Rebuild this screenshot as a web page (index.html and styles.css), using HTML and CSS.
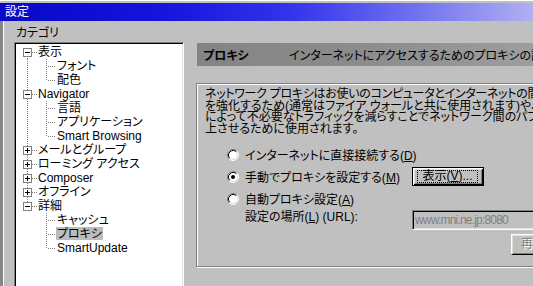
FILE: index.html
```html
<!DOCTYPE html>
<html lang="ja">
<head>
<meta charset="utf-8">
<title>設定</title>
<link rel="stylesheet" href="styles.css">
</head>
<body>
<div class="window">
  <div class="titlebar">設定</div>
  <div class="client">
    <div class="left">
      <div class="caption">カテゴリ</div>
      <div class="tree">
        <div class="row">
          <span class="g0 first"><svg class="box" width="9" height="9" viewBox="0 0 9 9"><rect x="0.5" y="0.5" width="8" height="8" fill="#fff" stroke="#808080"/><path d="M2 4.5H7" stroke="#000"/></svg></span>
          <span class="lbl">表示</span>
        </div>
        <div class="row">
          <span class="g0 pipe"></span><span class="g1 mid"></span>
          <span class="lbl">フォント</span>
        </div>
        <div class="row">
          <span class="g0 pipe"></span><span class="g1 last"></span>
          <span class="lbl">配色</span>
        </div>
        <div class="row">
          <span class="g0 mid"><svg class="box" width="9" height="9" viewBox="0 0 9 9"><rect x="0.5" y="0.5" width="8" height="8" fill="#fff" stroke="#808080"/><path d="M2 4.5H7" stroke="#000"/></svg></span>
          <span class="lbl">Navigator</span>
        </div>
        <div class="row">
          <span class="g0 pipe"></span><span class="g1 mid"></span>
          <span class="lbl">言語</span>
        </div>
        <div class="row">
          <span class="g0 pipe"></span><span class="g1 mid"></span>
          <span class="lbl">アプリケーション</span>
        </div>
        <div class="row">
          <span class="g0 pipe"></span><span class="g1 last"></span>
          <span class="lbl">Smart Browsing</span>
        </div>
        <div class="row">
          <span class="g0 mid"><svg class="box" width="9" height="9" viewBox="0 0 9 9"><rect x="0.5" y="0.5" width="8" height="8" fill="#fff" stroke="#808080"/><path d="M2 4.5H7M4.5 2V7" stroke="#000"/></svg></span>
          <span class="lbl">メールとグループ</span>
        </div>
        <div class="row">
          <span class="g0 mid"><svg class="box" width="9" height="9" viewBox="0 0 9 9"><rect x="0.5" y="0.5" width="8" height="8" fill="#fff" stroke="#808080"/><path d="M2 4.5H7M4.5 2V7" stroke="#000"/></svg></span>
          <span class="lbl">ローミング アクセス</span>
        </div>
        <div class="row">
          <span class="g0 mid"><svg class="box" width="9" height="9" viewBox="0 0 9 9"><rect x="0.5" y="0.5" width="8" height="8" fill="#fff" stroke="#808080"/><path d="M2 4.5H7M4.5 2V7" stroke="#000"/></svg></span>
          <span class="lbl">Composer</span>
        </div>
        <div class="row">
          <span class="g0 mid"><svg class="box" width="9" height="9" viewBox="0 0 9 9"><rect x="0.5" y="0.5" width="8" height="8" fill="#fff" stroke="#808080"/><path d="M2 4.5H7M4.5 2V7" stroke="#000"/></svg></span>
          <span class="lbl">オフライン</span>
        </div>
        <div class="row">
          <span class="g0 last"><svg class="box" width="9" height="9" viewBox="0 0 9 9"><rect x="0.5" y="0.5" width="8" height="8" fill="#fff" stroke="#808080"/><path d="M2 4.5H7" stroke="#000"/></svg></span>
          <span class="lbl">詳細</span>
        </div>
        <div class="row">
          <span class="g0"></span><span class="g1 mid"></span>
          <span class="lbl">キャッシュ</span>
        </div>
        <div class="row">
          <span class="g0"></span><span class="g1 mid"></span>
          <span class="lbl selected">プロキシ</span>
        </div>
        <div class="row">
          <span class="g0"></span><span class="g1 last"></span>
          <span class="lbl">SmartUpdate</span>
        </div>
      </div>
    </div>
    <div class="right">
      <div class="header">
        <span class="htitle">プロキシ</span>
        <span class="hdesc">インターネットにアクセスするためのプロキシの設定</span>
      </div>
      <div class="group">
        <div class="desc">
          <div class="l1">ネットワーク プロキシはお使いのコンピュータとインターネットの間のセキュリティ</div>
          <div>を強化するため(通常はファイア ウォールと共に使用されます)や、キャッシュ</div>
          <div>によって不必要なトラフィックを減らすことでネットワーク間のパフォーマンスを向</div>
          <div>上させるために使用されます。</div>
        </div>
        <div class="opts">
          <div class="opt">
            <svg class="radio" width="12" height="12" viewBox="0 0 12 12"><circle cx="6" cy="6" r="5" fill="#fff"/><path d="M2.11 9.89A5.5 5.5 0 0 1 9.89 2.11" fill="none" stroke="#808080"/><path d="M9.89 2.11A5.5 5.5 0 0 1 2.11 9.89" fill="none" stroke="#fff"/><path d="M2.82 9.18A4.5 4.5 0 0 1 9.18 2.82" fill="none" stroke="#000"/><path d="M9.18 2.82A4.5 4.5 0 0 1 2.82 9.18" fill="none" stroke="#dfdfdf"/></svg>
            <span>インターネットに直接接続する(<u>D</u>)</span>
          </div>
          <div class="opt">
            <svg class="radio" width="12" height="12" viewBox="0 0 12 12"><circle cx="6" cy="6" r="5" fill="#fff"/><path d="M2.11 9.89A5.5 5.5 0 0 1 9.89 2.11" fill="none" stroke="#808080"/><path d="M9.89 2.11A5.5 5.5 0 0 1 2.11 9.89" fill="none" stroke="#fff"/><path d="M2.82 9.18A4.5 4.5 0 0 1 9.18 2.82" fill="none" stroke="#000"/><path d="M9.18 2.82A4.5 4.5 0 0 1 2.82 9.18" fill="none" stroke="#dfdfdf"/><circle cx="6" cy="6" r="2" fill="#000"/></svg>
            <span>手動でプロキシを設定する(<u>M</u>)</span>
          </div>
          <div class="btn default"><span class="focus">表示(<u>V</u>)...</span></div>
          <div class="opt">
            <svg class="radio" width="12" height="12" viewBox="0 0 12 12"><circle cx="6" cy="6" r="5" fill="#fff"/><path d="M2.11 9.89A5.5 5.5 0 0 1 9.89 2.11" fill="none" stroke="#808080"/><path d="M9.89 2.11A5.5 5.5 0 0 1 2.11 9.89" fill="none" stroke="#fff"/><path d="M2.82 9.18A4.5 4.5 0 0 1 9.18 2.82" fill="none" stroke="#000"/><path d="M9.18 2.82A4.5 4.5 0 0 1 2.82 9.18" fill="none" stroke="#dfdfdf"/></svg>
            <span>自動プロキシ設定(<u>A</u>)</span>
          </div>
          <div class="loc">設定の場所(<u>L</u>) (URL):</div>
          <div class="field">www.mni.ne.jp:8080</div>
          <div class="btn disabled reload">再読み込み(R)</div>
        </div>
      </div>
    </div>
  </div>
</div>
</body>
</html>
```

FILE: styles.css
```css
html, body {
  margin: 0;
  padding: 0;
  width: 533px;
  height: 286px;
  overflow: hidden;
  background: #c0c0c0;
}

body {
  font-family: "Liberation Sans", "Noto Sans CJK JP", sans-serif;
  font-size: 12px;
  color: #000;
  font-feature-settings: "palt" 1;
}

.window {
  width: 533px;
  height: 286px;
  overflow: hidden;
  padding-top: 3px;
  box-sizing: border-box;
  box-shadow: inset 0 1px #ffffff;
}

.titlebar {
  height: 18px;
  line-height: 18px;
  padding-left: 5px;
  color: #fff;
  background: linear-gradient(to right, #0808c8 0%, #1414dc 30%, #3434ec 55%, #7c7cf0 82%, #b0b0f2 100%);
  white-space: nowrap;
}

.client {
  display: flex;
  align-items: flex-start;
  height: 265px;
  border-left: 3px solid #868686;
  box-shadow: inset 1px 0 #ffffff;
}

.left {
  flex: none;
  width: 170px;
  margin-left: 11px;
  padding-top: 5px;
}

.caption {
  height: 15px;
  line-height: 15px;
  padding-left: 2px;
  white-space: nowrap;
}

.tree {
  margin-top: 1px;
  width: 170px;
  height: 260px;
  box-sizing: border-box;
  background: #fff;
  border: 1px solid;
  border-color: #808080 #ffffff #ffffff #808080;
  box-shadow: inset 1px 1px #000, inset -1px -1px #dfdfdf;
  padding: 2px 0 0 1px;
}

.row {
  display: flex;
  height: 14px;
  white-space: nowrap;
}

.g0, .g1 {
  flex: none;
  height: 14px;
  display: flex;
  align-items: flex-start;
  background-repeat: no-repeat;
}

.g0 { width: 21px; }
.g1 { width: 19px; }

.box {
  display: block;
  margin: 3px 0 0 7px;
}

.g0.first {
  background-image:
    repeating-linear-gradient(to bottom, #808080 0 1px, transparent 1px 2px),
    repeating-linear-gradient(to right, #808080 0 1px, transparent 1px 2px);
  background-position: 11px 7px, 16px 7px;
  background-size: 1px 7px, 5px 1px;
}

.g0.mid {
  background-image:
    repeating-linear-gradient(to bottom, #808080 0 1px, transparent 1px 2px),
    repeating-linear-gradient(to right, #808080 0 1px, transparent 1px 2px);
  background-position: 11px 0, 16px 7px;
  background-size: 1px 14px, 5px 1px;
}

.g0.last {
  background-image:
    repeating-linear-gradient(to bottom, #808080 0 1px, transparent 1px 2px),
    repeating-linear-gradient(to right, #808080 0 1px, transparent 1px 2px);
  background-position: 11px 0, 16px 7px;
  background-size: 1px 7px, 5px 1px;
}

.g0.pipe {
  background-image: repeating-linear-gradient(to bottom, #808080 0 1px, transparent 1px 2px);
  background-position: 11px 0;
  background-size: 1px 14px;
}

.g1.mid {
  background-image:
    repeating-linear-gradient(to bottom, #808080 0 1px, transparent 1px 2px),
    repeating-linear-gradient(to right, #808080 0 1px, transparent 1px 2px);
  background-position: 9px 0, 11px 7px;
  background-size: 1px 14px, 8px 1px;
}

.g1.last {
  background-image:
    repeating-linear-gradient(to bottom, #808080 0 1px, transparent 1px 2px),
    repeating-linear-gradient(to right, #808080 0 1px, transparent 1px 2px);
  background-position: 9px 0, 11px 7px;
  background-size: 1px 8px, 8px 1px;
}

.lbl {
  padding: 0 1px;
  line-height: 14px;
  height: 14px;
}

.lbl.selected {
  background: #bcbcbc;
  height: 13px;
  line-height: 14px;
}

.right {
  flex: none;
  width: 420px;
  margin-left: 12px;
  padding-top: 22px;
}

.header {
  margin-left: 1px;
  height: 23px;
  display: flex;
  align-items: center;
  padding-left: 6px;
  background: linear-gradient(to right, #848484 0%, #8c8c8c 40%, #a6a6a6 100%);
  white-space: nowrap;
}

.htitle {
  flex: none;
  width: 86px;
  font-weight: bold;
}

.group {
  margin-top: 17px;
  height: 184px;
  box-sizing: border-box;
  border: 1px solid #808080;
  box-shadow: inset 1px 1px #ffffff, 1px 1px #ffffff;
  padding: 5px 0 0 8px;
}

.desc {
  line-height: 11.7px;
  white-space: nowrap;
}

.desc .l1 {
  letter-spacing: -0.3px;
}

.opts {
  margin: 8px 0 0 22px;
  display: grid;
  grid-template-columns: 185px auto;
  grid-template-rows: 22px 22px 22px 20px auto;
  align-items: center;
  justify-items: start;
}

.opt {
  grid-column: 1;
  display: flex;
  align-items: center;
  gap: 6px;
  white-space: nowrap;
}

.radio {
  display: block;
  flex: none;
}

.opt:nth-child(1) { grid-row: 1; }
.opt:nth-child(2) { grid-row: 2; }
.opt:nth-child(4) { grid-row: 3; }

.btn {
  box-sizing: border-box;
  white-space: nowrap;
  background: #c0c0c0;
}

.btn.default {
  grid-column: 2;
  grid-row: 2;
  width: 72px;
  height: 19px;
  border: 1px solid #000;
  box-shadow: inset 1px 1px #ffffff, inset -1px -1px #000, inset 2px 2px #dfdfdf, inset -2px -2px #808080;
  padding: 2px 5px 2px 4px;
  display: flex;
}

.focus {
  flex: 1;
  border: 1px dotted #000;
  display: flex;
  align-items: center;
  justify-content: center;
  line-height: 11px;
}

.loc {
  grid-column: 1;
  grid-row: 4;
  align-self: start;
  padding-left: 18px;
  line-height: 14px;
  white-space: nowrap;
}

.field {
  grid-column: 2;
  grid-row: 4;
  width: 200px;
  height: 20px;
  box-sizing: border-box;
  border: 1px solid;
  border-color: #808080 #ffffff #ffffff #808080;
  box-shadow: inset 1px 1px #000, inset -1px -1px #dfdfdf;
  background: #c0c0c0;
  color: #808080;
  padding-left: 2px;
  line-height: 18px;
  letter-spacing: -0.8px;
  white-space: nowrap;
}

.btn.reload {
  grid-column: 2;
  grid-row: 5;
  margin: 4px 0 0 99px;
  height: 21px;
  border: 1px solid;
  border-color: #ffffff #000 #000 #ffffff;
  box-shadow: inset 1px 1px #dfdfdf, inset -1px -1px #808080;
  padding: 0 9px;
  line-height: 19px;
  color: #808080;
  text-shadow: 1px 1px #ffffff;
}

u {
  text-underline-offset: 1px;
}
```
